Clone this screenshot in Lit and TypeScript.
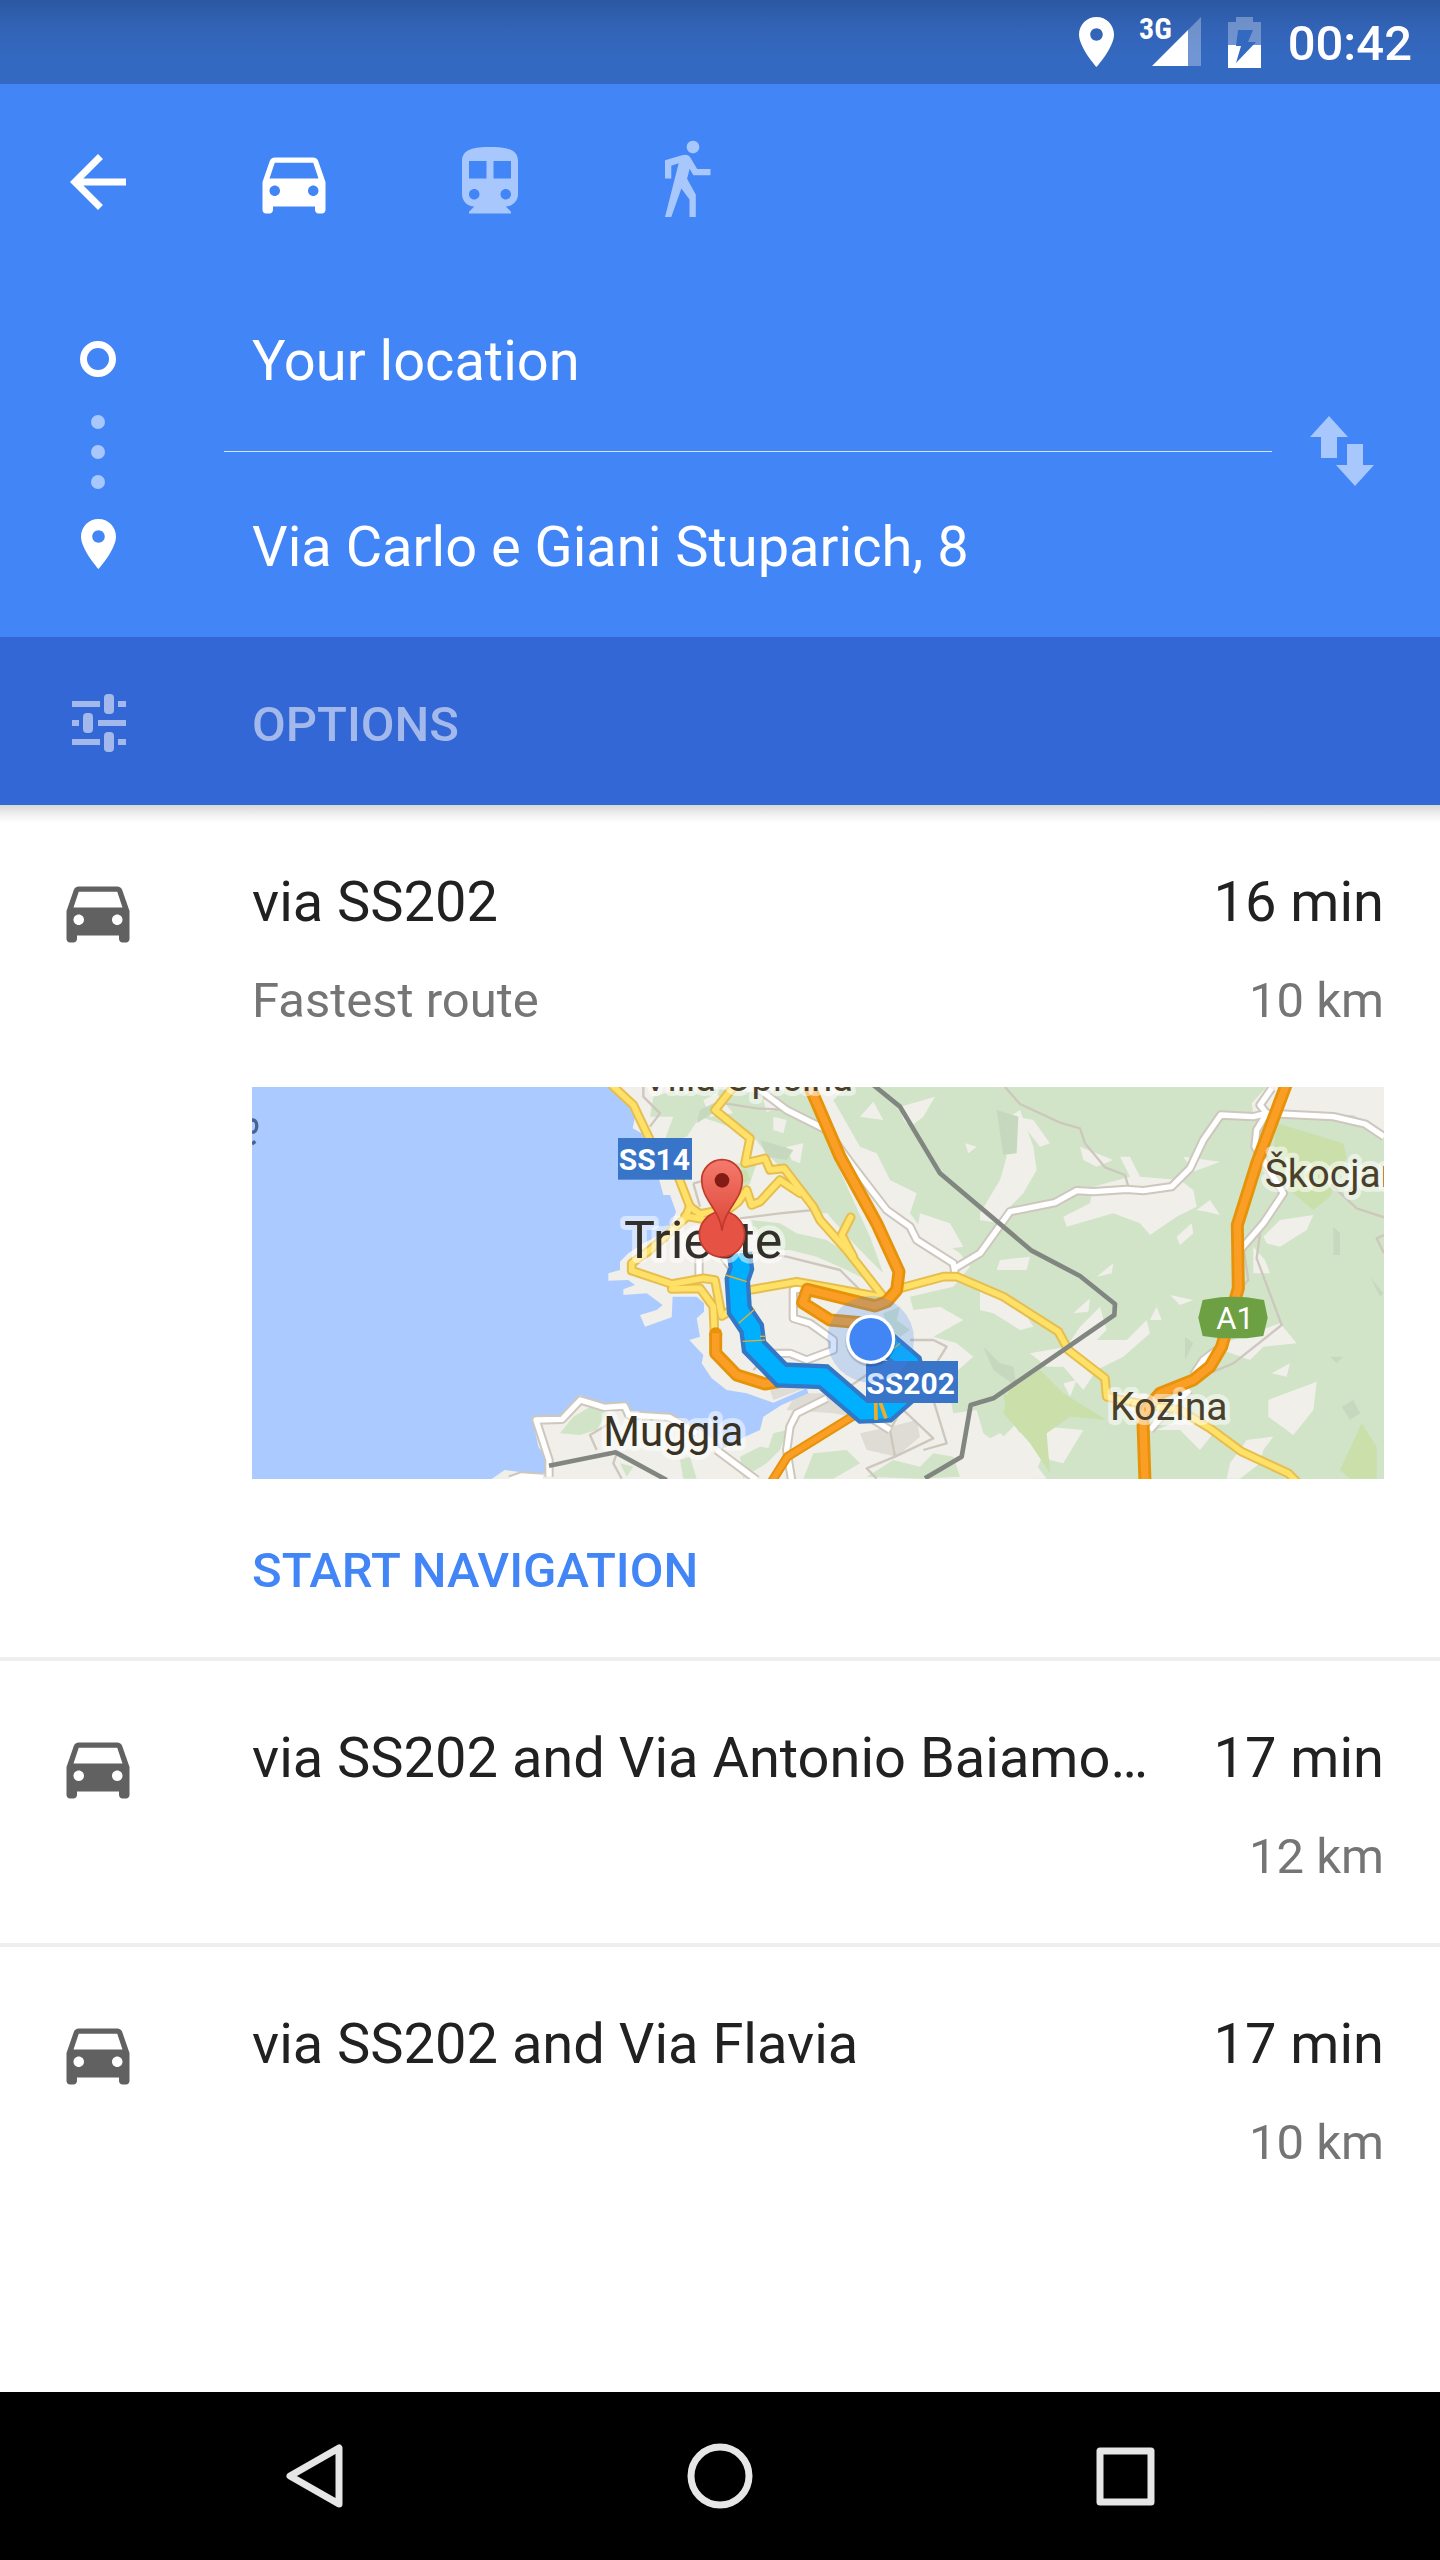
import { LitElement, html, svg, css } from "lit";
import { customElement, property, state } from "lit/decorators.js";
import { classMap } from "lit/directives/class-map.js";

const CAR = "M18.92 6.01C18.72 5.42 18.16 5 17.5 5h-11c-.66 0-1.21.42-1.42 1.01L3 12v8c0 .55.45 1 1 1h1c.55 0 1-.45 1-1v-1h12v1c0 .55.45 1 1 1h1c.55 0 1-.45 1-1v-8l-2.08-5.99zM6.5 16c-.83 0-1.5-.67-1.5-1.5S5.67 13 6.5 13s1.5.67 1.5 1.5S7.33 16 6.5 16zm11 0c-.83 0-1.5-.67-1.5-1.5s.67-1.5 1.5-1.5 1.5.67 1.5 1.5-.67 1.5-1.5 1.5zM5 11l1.5-4.5h11L19 11H5z";
const TRAIN = "M12 2c-4.42 0-8 .5-8 4v9.5C4 17.43 5.57 19 7.5 19L6 20.5v.5h12v-.5L16.5 19c1.93 0 3.5-1.57 3.5-3.5V6c0-3.5-3.58-4-8-4zM7.5 17c-.83 0-1.5-.67-1.5-1.5S6.67 14 7.5 14s1.5.67 1.5 1.5S8.33 17 7.5 17zm3.5-6H6V6h5v5zm5.5 6c-.83 0-1.5-.67-1.5-1.5s.67-1.5 1.5-1.5 1.5.67 1.5 1.5-.67 1.5-1.5 1.5zm1.5-6h-5V6h5v5z";
const WALK = "M14 3.8c1 0 1.8-.8 1.8-1.8S15 .2 14 .2 12.2 1 12.2 2 13 3.8 14 3.8zM14.1 10.1H19V8.3h-3.8l-1.97-3.3c-.3-.5-.83-.8-1.43-.8-.3 0-.5.1-.7.1L6 5.8V11h1.8V7.33l2.11-.66L6 22h1.8l2.87-8.11L13 17v5h1.8v-6.41l-2.49-4.54.73-2.87z";
const BACK = "M20 11H7.83l5.59-5.59L12 4l-8 8 8 8 1.41-1.41L7.83 13H20v-2z";
const PLACE = "M12 2C8.13 2 5 5.13 5 9c0 5.25 7 13 7 13s7-7.75 7-13c0-3.87-3.13-7-7-7zm0 9.5c-1.38 0-2.5-1.12-2.5-2.5s1.12-2.5 2.5-2.5 2.5 1.12 2.5 2.5-1.12 2.5-2.5 2.5z";

interface Route {
  title: string;
  note?: string;
  time: string;
  distance: string;
  primary?: boolean;
}

const ROUTES: Route[] = [
  { title: "via SS202", note: "Fastest route", time: "16 min", distance: "10 km", primary: true },
  { title: "via SS202 and Via Antonio Baiamonti", time: "17 min", distance: "12 km" },
  { title: "via SS202 and Via Flavia", time: "17 min", distance: "10 km" },
];

/* Map geometry. One map unit is a third of a layout pixel. */
const WATER = "-1044,21 30,21 75,62 105,110 98,145 125,160 140,200 178,300 190,345 210,345 228,395 215,430 190,460 130,490 85,520 60,545 60,570 25,580 25,602 85,600 105,615 70,628 70,645 140,640 188,675 170,690 120,705 135,740 215,712 218,650 290,650 312,670 312,695 290,715 300,770 268,780 310,825 305,850 335,895 380,930 440,940 520,968 620,925 625,940 545,975 490,1010 480,1050 435,1070 360,1110 340,1080 290,1040 208,1025 86,1000 74,970 13,978 -59,945 -120,1008 -203,1012 -185,1100 -161,1135 -161,1180 -220,1178 -286,1170 -325,1197 -1044,1197";

const FOREST = [
  "860,21 2352,21 2352,1197 1300,1197 1330,1120 1270,1010 1190,1090 1150,1060 1130,990 1060,1000 1040,900 1120,830 1070,790 1000,770 1090,720 1020,680 940,690 930,650 1060,620 1110,560 1080,520 960,440 930,400 950,340 870,300 830,220 780,200 700,60 740,21",
  "160,50 260,21 500,40 650,160 700,260 770,400 660,400 620,340 540,260 500,220 460,170 360,130 300,110 260,170 190,190 220,110 150,110",
  "420,40 620,21 670,160 750,340 810,470 850,580 770,500 690,410 640,330 560,250 500,200 480,110",
  "450,420 540,430 590,460 680,480 740,520 800,600 740,570 650,530 570,510 480,510",
  "380,250 470,250 450,310 420,340",
  "-120,1060 -80,1010 -20,975 30,985 -10,1050 -60,1065",
  "240,1140 270,1130 290,1196 250,1196",
  "420,1130 480,1100 540,1110 500,1150 450,1180 430,1196",
  "640,1120 740,1110 780,1150 700,1196 610,1196",
  "800,1190 880,1140 960,1160 1000,1120 1060,1130 1080,1190 960,1196",
  "850,700 900,680 890,720 930,750 900,770 860,740",
  "520,1060 560,1050 540,1110 500,1120",
  "60,1150 100,1160 80,1190",
];

const CLEARINGS = [
  "310,60 350,40 400,100 330,110", "560,200 610,190 600,250 575,240", "520,110 560,120 550,160 520,150", "490,60 540,60 530,90 500,95",
  "780,110 820,65 850,120 810,115", "900,80 1005,50 970,110 930,140 910,120", "1095,190 1130,200 1105,220", "680,180 760,190 860,330 900,400 860,400 780,290",
  "600,440 650,440 640,470 600,460", "620,40 650,60 640,80", "960,400 1050,430 1090,500 1020,510 950,460",
  "1140,400 1200,300 1220,230 1200,130 1260,90 1300,200 1310,270 1270,340 1220,390 1200,430 1140,420",
  "1250,110 1300,120 1350,190 1320,200",
  "1390,410 1470,370 1480,320 1590,290 1560,230 1590,230 1620,290 1740,300 1780,330 1790,380 1730,410 1650,465 1620,430 1540,400 1400,440",
  "1440,200 1540,240 1490,260 1450,240", "1750,230 1860,245 1780,275",
  "2000,21 2352,21 2352,160 2260,105 1960,100 1955,70",
  "1990,470 2040,420 2140,405 2120,450 2040,500 2000,490", "1960,500 1995,540 2010,580 1960,580",
  "1730,470 1775,430 1780,460 1740,495", "1790,390 1830,360 1860,405 1820,395", "1490,590 1540,550 1535,580", "1420,700 1470,655 1465,695",
  "1140,620 1250,660 1300,740 1260,750 1180,700 1140,690",
  "1440,740 1500,680 1520,750 1490,780 1580,780 1640,720 1650,760 1570,830 1490,870 1450,930 1390,860 1340,860 1290,820 1400,800",
  "1840,800 2040,730 2090,790 1990,800 1950,840", "2015,880 2070,850 2060,890", "2005,960 2150,905 2140,990 2080,1065 2005,1010",
  "1670,1050 1760,1010 1840,1060 1800,1110 1740,1050", "1310,1090 1340,1040 1450,1050 1390,1150 1350,1140",
  "1890,1150 1940,1080 2020,1070 1990,1110 1980,1150 1920,1196 1880,1196", "1140,1090 1200,1060 1290,1130 1340,1196 1140,1196",
  "1670,680 1685,720 1650,720", "1710,645 1780,660 1740,675", "1510,940 1640,940 1660,1000 1560,990", "1200,540 1290,530 1280,570 1190,570", "1390,910 1430,900 1410,950",
];

const PARKS = [
  "2030,130 2230,190 2240,230 2190,350 2140,390 2080,340 2010,300",
  "1320,870 1390,940 1520,1020 1410,1010 1340,1060 1350,1180 1290,1090 1210,1000 1230,920",
  "2285,1030 2330,1100 2330,1196 2250,1196 2220,1170",
  "380,270 440,270 450,300 410,320", "1210,940 1260,960 1260,1060 1220,1000",
];

const DARK_WOODS = [
  "1190,90 1255,110 1250,220 1210,225", "2200,440 2220,460 2220,525 2200,525", "1755,770 1780,790 1755,840",
  "2225,980 2260,960 2280,1000 2250,1020", "480,180 580,210 560,240 500,230", "300,90 360,60 370,80 290,130", "2310,590 2350,640 2340,650",
  "1150,800 1200,850 1240,860 1250,920 1180,870", "2190,830 2230,830 2210,850",
];

const URBAN = ["510,930 560,910 640,915 520,960", "590,940 680,940 760,1010 700,1000 560,990", "780,1060 870,1040 950,1020 960,1070 890,1130 800,1110"];

const LANES = [
  "130,21 130,50 180,100 150,140", "375,70 470,85 560,90", "280,310 320,300 350,330", "280,310 300,380", "420,415 540,400 640,390", "400,510 560,530 720,570 840,690",
  "930,780 1000,780 1040,800 990,880 920,960", "920,960 870,1050 885,1130 1000,1075 910,990", "1000,960 1040,1090 970,1110", "830,1196 800,1165 885,1130",
  "1215,21 1260,72 1380,128 1440,145 1455,190 1515,262 1575,285 1585,320", "1980,460 1970,535 2045,735 1900,850 1780,900", "2190,310 2270,385 2352,412",
  "2352,465 2330,475 2352,520", "1640,1060 1690,990", "-10,1110 -30,1065 30,1030", "50,1120 40,1150 65,1196", "720,940 850,850", "510,820 460,870", "1930,500 1945,600 1910,640",
];

const STREETS = [
  "480,30 560,90 680,150 760,260 860,390 930,440 950,480 1060,550 1065,580",
  "1065,565 1140,520 1230,395 1365,368 1430,332 1480,335 1580,328 1630,332 1715,320 1770,265 1810,180 1862,105 1960,110 2000,100 2200,110 2295,132 2352,170",
  "2015,25 1980,75 2000,100 1970,150 1965,200 2050,340 1990,430 1925,505",
  "610,625 580,630 580,715 630,730 700,780 700,810 620,840 570,820 500,820",
  "297,590 297,530", "370,530 400,570", "870,1050 790,1000", "680,955 590,1000 570,1040 560,1110 575,1200",
  "-153,1190 -153,1140 -192,1020 -114,1018 -59,960 13,982 74,978 86,1005 208,1012 290,1060", "350,1110 470,1200", "-270,1200 -236,1188 -170,1192",
  "1780,885 1810,840 1850,810", "1650,1050 1720,970 1770,930",
];

const MAIN_ROADS = [
  "35,15 100,75 150,180", "235,290 270,380 300,402 390,385 415,365 440,330 455,375 480,365 540,300 600,340",
  "405,15 345,90 450,175 435,250 495,235 510,270 552,265 640,380 660,420 740,510 850,650", "752,412 725,465 760,530",
  "270,378 255,415 150,510 95,550 95,572 215,612 310,595 345,600 365,708 395,690", "255,408 310,418", "215,627 300,625 340,680 343,750",
  "450,630 590,605 700,625 860,655", "900,625 1030,590 1070,590 1210,650 1375,755 1405,810 1515,895 1520,950 1640,975 1740,990 1830,1045 1925,1115 2065,1180 2090,1205",
];

const BORDERS = [
  "820,15 900,80 1020,280 1295,512 1440,588 1545,672 1543,705 1180,955 1112,975 1085,1130 975,1195", "-153,1157 47,1117 200,1200",
];

const MOTORWAYS = [
  "625,10 720,230 830,430 897,575 890,630 860,665 825,678 622,628 608,668 690,720 800,730",
  "347,760 347,820 410,885 495,912 560,900", "2060,10 1970,250 1912,435 1915,625 1865,800 1830,860 1780,900 1680,940 1628,1000 1635,1205",
];
const TRUNK = ["515,1205 562,1130 780,995"];

const ROUTE_LINE = "418,520 424,565 412,600 418,690 455,745 462,800 545,885 670,890 790,993 860,990 945,915 930,850 860,790";

const polys = (items: string[], cls: string) => items.map((p) => svg`<polygon class=${cls} points=${p} />`);
const lines = (items: string[], cls: string) => items.map((p) => svg`<polyline class=${cls} points=${p} />`);

@customElement("route-map")
class RouteMap extends LitElement {
  static styles = css`
    :host { display: block; }
    svg { display: block; width: 100%; height: auto; font-family: Roboto, sans-serif; }
    polyline { fill: none; stroke-linejoin: round; }
    .land { fill: #f0efea; }
    .water { fill: #abcaff; }
    .forest { fill: #d1e4c8; }
    .park { fill: #cadfaa; }
    .woods { fill: #c6d9bf; }
    .urban { fill: #dfdcd5; }
    .lane { stroke: #cdc7bd; stroke-width: 7; }
    .street-edge { stroke: #cdc7bd; stroke-width: 28; }
    .street { stroke: #fff; stroke-width: 16; }
    .main-edge { stroke: #e6be4e; stroke-width: 29; stroke-linecap: round; }
    .main { stroke: #ffe168; stroke-width: 17; stroke-linecap: round; }
    .border { stroke: #828681; stroke-width: 14; }
    .motorway-edge { stroke: #e6930a; stroke-width: 39; }
    .motorway { stroke: #fb9e25; stroke-width: 22; }
    .trunk-edge { stroke: #e6930a; stroke-width: 28; }
    .trunk { stroke: #fb9e25; stroke-width: 16; }
    .route-edge { stroke: #3278c6; stroke-width: 76; stroke-linejoin: miter; }
    .route { stroke: #00b0ff; stroke-width: 50; stroke-linejoin: miter; }
    .tick { stroke: #efac2a; stroke-width: 4; }
    .wide-tick { stroke: #efac2a; stroke-width: 11; }
    .halo { paint-order: stroke; stroke: #fff; stroke-opacity: 0.5; stroke-width: 30; stroke-linejoin: round; }
    .city { font-size: 156px; fill: #33302a; }
    .town { font-size: 126px; fill: #383225; }
    .village { font-size: 117px; fill: #4a3f2b; }
    .hamlet { font-size: 114px; fill: #4a3f2b; }
    .plate { fill: #3874c8; }
    .plate-text { font-size: 90px; font-weight: 700; fill: #fff; }
    .shield { fill: #6ca043; }
    .shield-text { font-size: 93px; fill: #fff; text-anchor: middle; }
    .sea-mark { fill: none; stroke: #46648f; stroke-width: 10; }
  `;

  render() {
    return html`
      <svg viewBox="-1044 21 3396 1176" role="img" aria-label="Route map from your location to Trieste">
        <defs>
          <linearGradient id="pin-fill" x1="0" y1="0" x2="0" y2="1">
            <stop offset="0" stop-color="#f57a6c" />
            <stop offset="1" stop-color="#dc4638" />
          </linearGradient>
        </defs>
        <rect class="land" x="-1044" y="21" width="3396" height="1176" />
        ${polys(FOREST, "forest")} ${polys(CLEARINGS, "land")} ${polys(PARKS, "park")} ${polys(DARK_WOODS, "woods")} ${polys(URBAN, "urban")}
        <polygon class="water" points=${WATER} />
        <path class="sea-mark" d="M-1044 120 q16 0 14 22 q-2 16 -14 14 M-1044 192 l10 -8" />
        ${lines(LANES, "lane")}
        ${lines(STREETS, "street-edge")} ${lines(STREETS, "street")}
        ${lines(MAIN_ROADS, "main-edge")} ${lines(MAIN_ROADS, "main")}
        ${lines(BORDERS, "border")}
        ${lines(TRUNK, "trunk-edge")} ${lines(TRUNK, "trunk")}
        ${lines(MOTORWAYS, "motorway-edge")}
        <circle cx="347" cy="762" r="20" fill="#e6930a" />
        ${lines(MOTORWAYS, "motorway")}
        <polyline class="route-edge" points=${ROUTE_LINE} />
        <polyline class="route" points=${ROUTE_LINE} />
        ${lines(["376,585 440,605", "416,730 464,688", "428,784 495,780", "480,769 495,769", "880,806 900,790"], "tick")}
        ${lines(["827,965 828,1020", "840,965 858,1015"], "wide-tick")}
        <text class="hamlet halo" x="130" y="33">Villa Opicina</text>
        <text class="city halo" x="72" y="533">Trieste</text>
        <text class="town halo" x="10" y="1097">Muggia</text>
        <text class="village halo" x="1530" y="1019">Kozina</text>
        <text class="village halo" x="1994" y="320">Škocjan</text>
        <rect class="plate" x="54" y="174" width="222" height="125" />
        <text class="plate-text" x="56" y="271">SS14</text>
        <rect class="plate" x="798" y="843" width="276" height="126" />
        <text class="plate-text" x="799" y="942">SS202</text>
        <polygon class="shield" points="1808,660 1860,652 1900,650 1940,652 1992,660 2003,713 1990,768 1940,775 1860,775 1808,768 1795,713" />
        <text class="shield-text" x="1905" y="746">A1</text>
        <circle cx="812" cy="778" r="130" fill="#4285f4" fill-opacity="0.24" />
        <circle cx="812" cy="784" r="76" fill="#000" fill-opacity="0.14" />
        <circle cx="812" cy="778" r="74" fill="#fff" />
        <circle cx="812" cy="778" r="64" fill="#4285f4" />
        <circle cx="366" cy="463" r="68" fill="#e65345" stroke="#c0392d" stroke-width="5" />
        <path d="M366 452 C358 385 305 360 305 300 A61 61 0 0 1 427 300 C427 360 374 385 366 452 Z" fill="url(#pin-fill)" stroke="#c0392d" stroke-width="5" />
        <circle cx="366" cy="301" r="22" fill="#821c15" />
      </svg>
    `;
  }
}

@customElement("route-item")
class RouteItem extends LitElement {
  @property({ attribute: false }) route!: Route;

  static styles = css`
    :host { display: block; }
    .row { display: flex; align-items: flex-start; padding: 64px 56px 57px; }
    .icon { flex: none; display: block; width: 84px; height: 84px; fill: #616161; margin-right: 112px; }
    .body { flex: 1; min-width: 0; }
    .line { display: flex; justify-content: space-between; gap: 56px; }
    .title, .time { margin: 0; font-size: 56px; line-height: 66px; font-weight: 400; color: #212121; white-space: nowrap; }
    .title { overflow: hidden; text-overflow: ellipsis; }
    .sub { margin-top: 37px; font-size: 49px; line-height: 58px; color: #757575; }
    .map { display: block; margin: 57px 0 63px; }
    .start {
      display: block; padding: 0; border: 0; background: none; cursor: pointer;
      font: 500 49px/58px Roboto, sans-serif; color: #4285f6; text-transform: uppercase;
    }
  `;

  render() {
    const r = this.route;
    return html`
      <article class="row">
        <svg class="icon" viewBox="0 0 24 24" aria-hidden="true"><path d=${CAR} /></svg>
        <div class="body">
          <div class="line">
            <h2 class="title">${r.title}</h2>
            <span class="time">${r.time}</span>
          </div>
          <div class="line sub">
            <span>${r.note ?? ""}</span>
            <span>${r.distance}</span>
          </div>
          ${r.primary
            ? html`<route-map class="map"></route-map>
                <button class="start" type="button">Start navigation</button>`
            : ""}
        </div>
      </article>
    `;
  }
}

@customElement("app-root")
class AppRoot extends LitElement {
  @state() private mode = "Driving";

  static styles = css`
    :host {
      display: flex; flex-direction: column; min-height: 100vh; background: #fff;
      font-family: Roboto, "Noto Sans", sans-serif;
    }
    button { display: block; padding: 0; border: 0; background: none; color: inherit; cursor: pointer; }
    svg { display: block; fill: currentColor; }
    .status {
      display: flex; align-items: center; justify-content: flex-end; gap: 27px; box-sizing: border-box;
      height: 84px; padding: 0 28px 0 56px; color: #fff;
      background: linear-gradient(#2b58a2, #3263b6 28px, #3469c1 56px);
    }
    .place { width: 35px; height: 50px; }
    .signal { width: 60px; height: 50px; overflow: visible; }
    .signal-text { font: 700 30px "Roboto Condensed", "Liberation Sans Narrow", Roboto, sans-serif; }
    .battery { width: 33px; height: 51px; }
    .clock { padding-top: 4px; font-size: 49px; line-height: 58px; font-weight: 500; }
    .faded { opacity: 0.3; }
    .bolt { fill: #3469c1; }

    .header { background: #4285f6; color: #fff; }
    .modes { display: flex; gap: 112px; padding: 56px; }
    .mode { color: #a8c7fc; }
    .mode.active { color: #fff; }
    .mode svg, .back svg, .swap svg, .tune { width: 84px; height: 84px; }
    .form { display: flex; padding-right: 56px; }
    .trail { display: flex; flex-direction: column; align-items: center; flex: none; width: 196px; margin-right: 28px; padding-top: 61px; }
    .ring { box-sizing: border-box; width: 36px; height: 36px; border: 7px solid #fff; border-radius: 50%; }
    .dots { display: flex; flex-direction: column; gap: 16px; padding: 38px 0 30px; }
    .dot { width: 14px; height: 14px; border-radius: 50%; background: #a8c7fc; }
    .fields { flex: 1; min-width: 0; padding: 48px 0 57px; }
    .field {
      display: block; box-sizing: border-box; width: 100%; height: 66px; padding: 0 28px; border: 0; outline: 0;
      background: none; color: #fff; font: 400 56px/66px Roboto, sans-serif;
    }
    .rule { height: 1px; margin: 57px 0 62px; border: 0; background: #d3e2fd; }
    .swap { align-self: flex-start; margin: 132px 0 0 28px; color: #a8c7fc; }
    .options {
      display: flex; align-items: center; gap: 112px; box-sizing: border-box; width: 100%; height: 168px; padding: 3px 56px 0;
      background: #3367d6; color: #a3b9eb; font: 500 49px/58px Roboto, sans-serif; text-transform: uppercase;
    }
    .options-text { padding-top: 4px; }

    .list { flex: 1; background: linear-gradient(#d6d6d6, #f0f0f0 9px, #fff 18px) no-repeat top / 100% 18px; }
    .item + .item { border-top: 4px solid #eee; }

    .nav { display: flex; justify-content: center; height: 168px; background: #000; color: #e6e6e6; }
    .key { flex: 0 1 405px; display: flex; align-items: center; justify-content: center; }
    .key svg { width: 84px; height: 84px; fill: none; stroke: currentColor; stroke-width: 7; stroke-linejoin: round; }
  `;

  private renderPin() {
    return html`<svg class="place" viewBox="5 2 14 20" aria-hidden="true"><path d=${PLACE} /></svg>`;
  }

  private renderMode(name: string, path: string) {
    const active = this.mode === name;
    return html`
      <button type="button" class=${classMap({ mode: true, active })} aria-label=${name} aria-pressed=${active} @click=${() => (this.mode = name)}>
        <svg viewBox="0 0 24 24" aria-hidden="true"><path d=${path} /></svg>
      </button>
    `;
  }

  render() {
    return html`
      <div class="status">
        ${this.renderPin()}
        <svg class="signal" viewBox="0 0 60 50" aria-label="Mobile signal">
          <path class="faded" d="M60 0V49H47V13z" />
          <path d="M47 13V49H11z" />
          <text class="signal-text" x="-2" y="22">3G</text>
        </svg>
        <svg class="battery" viewBox="0 0 33 51" aria-label="Battery charging">
          <path class="faded" d="M8 0h17v5h8v23H0V5h8z" />
          <path d="M0 28h33v23H0z" />
          <path class="bolt" d="M10 13h15l-5 12h8L8 46l5-17H8z" />
        </svg>
        <span class="clock">00:42</span>
      </div>

      <header class="header">
        <nav class="modes" aria-label="Travel mode">
          <button type="button" class="back" aria-label="Back">
            <svg viewBox="0 0 24 24" aria-hidden="true"><path d=${BACK} /></svg>
          </button>
          ${this.renderMode("Driving", CAR)} ${this.renderMode("Transit", TRAIN)} ${this.renderMode("Walking", WALK)}
        </nav>
        <div class="form">
          <div class="trail">
            <span class="ring"></span>
            <span class="dots"><i class="dot"></i><i class="dot"></i><i class="dot"></i></span>
            ${this.renderPin()}
          </div>
          <div class="fields">
            <input class="field" type="text" aria-label="Starting point" .value=${"Your location"} />
            <hr class="rule" />
            <input class="field" type="text" aria-label="Destination" .value=${"Via Carlo e Giani Stuparich, 8"} />
          </div>
          <button type="button" class="swap" aria-label="Swap start and destination">
            <svg viewBox="0 0 84 84" aria-hidden="true">
              <path d="M29 4 48 25H37V46H21V25H10z M47 32H63V53H74L55 74 36 53H47z" />
            </svg>
          </button>
        </div>
        <button type="button" class="options">
          <svg class="tune" viewBox="0 0 84 84" aria-hidden="true">
            <path d="M16 20h28v6H16z M62 20h8v6H62z M16 39h7v6H16z M42 39h28v6H42z M16 58h28v6H16z M62 58h8v6H62z" />
            <rect x="48" y="13" width="10" height="20" rx="4" />
            <rect x="27" y="32" width="10" height="20" rx="4" />
            <rect x="48" y="51" width="10" height="20" rx="4" />
          </svg>
          <span class="options-text">Options</span>
        </button>
      </header>

      <main class="list">
        ${ROUTES.map((route) => html`<route-item class="item" .route=${route}></route-item>`)}
      </main>

      <nav class="nav" aria-label="System">
        <button type="button" class="key" aria-label="Back">
          <svg viewBox="0 0 84 84" aria-hidden="true"><path d="M66 14V70L17 42z" /></svg>
        </button>
        <button type="button" class="key" aria-label="Home">
          <svg viewBox="0 0 84 84" aria-hidden="true"><circle cx="42" cy="42" r="29" /></svg>
        </button>
        <button type="button" class="key" aria-label="Recent apps">
          <svg viewBox="0 0 84 84" aria-hidden="true"><rect x="17" y="17" width="51" height="51" /></svg>
        </button>
      </nav>
    `;
  }
}
